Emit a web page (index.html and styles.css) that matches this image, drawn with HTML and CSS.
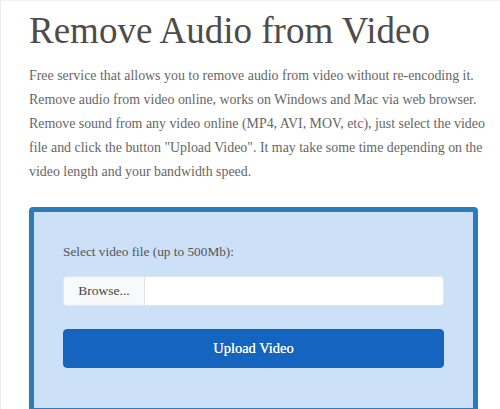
FILE: index.html
```html
<!DOCTYPE html>
<html>
<head>
<meta charset="utf-8">
<link rel="stylesheet" href="styles.css">
</head>
<body>
<div class="page">
  <h1 class="title">Remove Audio from Video</h1>
  <p class="intro">Free service that allows you to remove audio from video without re-encoding it.<br>Remove audio from video online, works on Windows and Mac via web browser.<br>Remove sound from any video online (MP4, AVI, MOV, etc), just select the video<br>file and click the button "Upload Video". It may take some time depending on the<br>video length and your bandwidth speed.</p>
  <div class="box">
    <label class="label">Select video file (up to 500Mb):</label>
    <div class="file-group">
      <span class="browse">Browse...</span>
      <span class="file-name"></span>
    </div>
    <button class="upload">Upload Video</button>
  </div>
</div>
</body>
</html>
```

FILE: styles.css
```css
html, body {
  margin: 0;
  padding: 0;
  background: #fff;
  overflow: hidden;
}
body {
  font-family: "Liberation Serif", "DejaVu Serif", serif;
  color: #555;
  height: 409px;
}
.page {
  border-left: 1px solid #ececec;
  border-top: 1px solid #f2f2f2;
  padding: 0 0 0 28px;
  height: 409px;
  box-sizing: border-box;
  overflow: hidden;
}
.title {
  margin: 0;
  padding-top: 8px;
  font-size: 37px;
  font-weight: normal;
  line-height: 44px;
  color: #4f4b48;
}
.intro {
  margin: 11px 0 0 0;
  font-size: 13.9px;
  line-height: 24px;
  color: #666;
  white-space: nowrap;
}
.box {
  margin-top: 23px;
  width: 449px;
  height: 206px;
  box-sizing: border-box;
  border: 5px solid #2b7cb8;
  border-radius: 4px;
  background: #cce0f7;
  padding: 30px 29px;
  display: flex;
  flex-direction: column;
}
.label {
  font-size: 13.3px;
  line-height: 20px;
  color: #555;
}
.file-group {
  margin-top: 14px;
  display: flex;
  height: 28px;
  border: 1px solid #dfe6ee;
  border-radius: 4px;
  background: #fff;
  overflow: hidden;
  flex-shrink: 0;
}
.browse {
  width: 80px;
  background: #f8f9fa;
  border-right: 1px solid #dfe3e8;
  display: flex;
  align-items: center;
  justify-content: center;
  font-size: 13.5px;
  color: #444;
}
.file-name {
  flex: 1;
}
.upload {
  margin-top: 23px;
  height: 39px;
  flex-shrink: 0;
  border: 1px solid #1a62b8;
  border-radius: 4px;
  background: #1565c0;
  color: #fff;
  font-family: "Liberation Serif", "DejaVu Serif", serif;
  font-size: 14.5px;
  font-weight: normal;
  text-shadow: 0 0 0.4px #fff;
}
```
